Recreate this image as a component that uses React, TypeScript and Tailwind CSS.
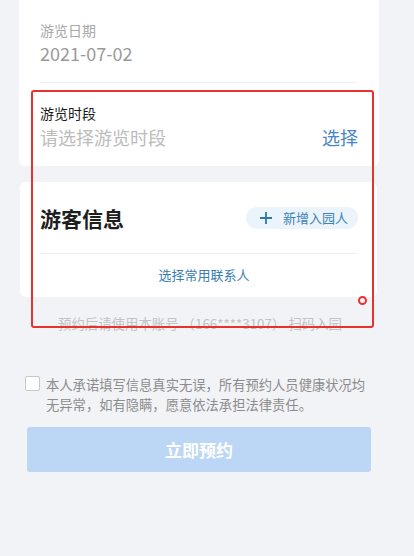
import React from "react";

export default function App() {
  return (
    <div
      className="relative w-[414px] h-[556px] overflow-hidden bg-[#f2f3f7]"
      style={{ fontFamily: '"Noto Sans CJK SC", "Noto Sans", sans-serif' }}
    >
      {/* Card 1 */}
      <div className="ml-[19px] w-[360px] h-[166px] bg-white rounded-b-[6px] px-[21px] pt-[19px]">
        <div className="text-[14px] leading-[22px] text-[#a8a8a8]">游览日期</div>
        <div className="text-[18px] leading-[24px] text-[#9a9a9a]">2021-07-02</div>
        <div className="h-px bg-[#eef0f3] mt-[17px] mr-[1px]" />
        <div className="text-[14px] leading-[20px] text-[#1a1a1a] mt-[20px]">游览时段</div>
        <div className="flex items-center justify-between mt-[2px]">
          <span className="text-[18px] leading-[24px] text-[#bcbcbc]">请选择游览时段</span>
          <span className="text-[18px] leading-[24px] text-[#4a86c4]">选择</span>
        </div>
      </div>

      {/* Card 2 */}
      <div className="ml-[20px] mt-[16px] w-[357px] h-[115px] bg-white rounded-[6px] px-[20px]">
        <div className="flex items-center justify-between h-[71px]">
          <span className="text-[21px] font-bold text-[#1e1e1e] leading-[28px]">游客信息</span>
          <span className="flex items-center h-[22px] pl-[13px] pr-[10px] rounded-full bg-[#ebf4fb] mr-[-1px]">
            <svg width="14" height="14" viewBox="0 0 14 14" className="mr-[10px]">
              <path d="M7 1v12M1 7h12" stroke="#2f78ae" strokeWidth="1.8" />
            </svg>
            <span className="text-[13px] leading-[18px] text-[#3c82b4]">新增入园人</span>
          </span>
        </div>
        <div className="h-px bg-[#eef0f3]" />
        <div className="flex items-center justify-center h-[43px] text-[13px] text-[#3a7eb1] pb-[1px] pl-[11px]">
          选择常用联系人
        </div>
      </div>

      {/* Footer note */}
      <div className="mt-[16px] text-center text-[13.4px] leading-[20px] text-[#c2c2c2] pr-[14px]">
        预约后请使用本账号 （166****3107） 扫码入园
      </div>

      {/* Agreement */}
      <div className="flex mt-[42px] pl-[25px] pr-[20px]">
        <div className="w-[15px] h-[15px] border border-[#c8c8c8] bg-white rounded-[2px] mt-[1px] shrink-0" />
        <div className="ml-[6px] text-[13.3px] leading-[20px] text-[#8c8c8c]">
          本人承诺填写信息真实无误，所有预约人员健康状况均
          <br />
          无异常，如有隐瞒，愿意依法承担法律责任。
        </div>
      </div>

      {/* Button */}
      <div className="ml-[27px] mt-[12px] w-[344px] h-[45px] rounded-[3px] bg-[#bcd6f5] flex items-center justify-center">
        <span className="text-[17px] font-bold text-white">立即预约</span>
      </div>

      {/* Red annotation overlay */}
      <div className="absolute left-[31px] top-[90px] w-[343px] h-[238px] border-2 border-[#e8322d] rounded-[3px] pointer-events-none" />
      <div className="absolute left-[358px] top-[296px] w-[9px] h-[9px] border-2 border-[#e8322d] rounded-full pointer-events-none" />
    </div>
  );
}
